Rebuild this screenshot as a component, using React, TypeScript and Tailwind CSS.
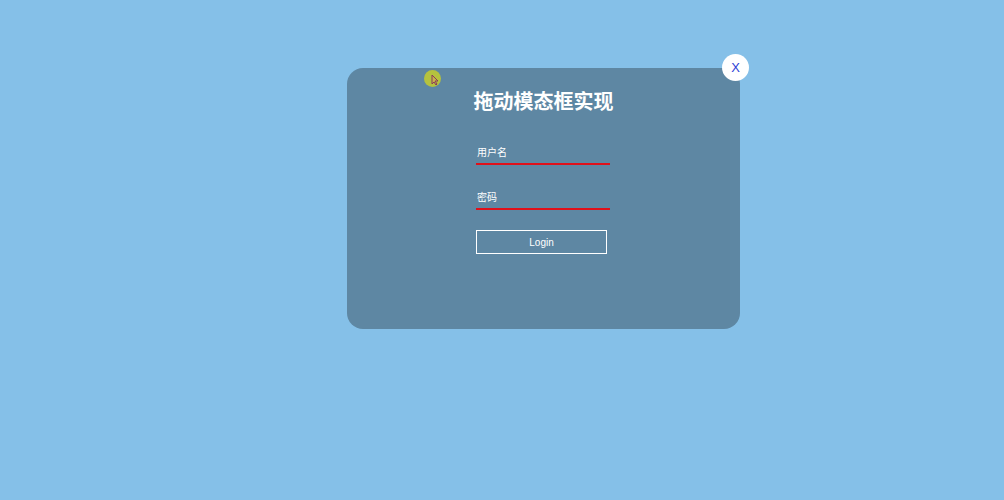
import React from "react";

function CloseButton() {
  return (
    <button className="absolute -right-[9px] -top-[14px] flex h-[27px] w-[27px] items-center justify-center rounded-full bg-white text-[13px] text-[#2f3fd6] [font-family:'Liberation_Sans',sans-serif]">
      X
    </button>
  );
}

function Field({ label }: { label: string }) {
  return (
    <div className="w-[134px] border-b-2 border-[#e0101a] pb-[4px] pl-[1px] text-[10px] leading-[12px] text-white">
      {label}
    </div>
  );
}

export default function App() {
  return (
    <div className="h-[500px] w-full overflow-hidden bg-[#85c0e8] pl-[347px] pt-[68px] [font-family:'Liberation_Sans','Noto_Sans_CJK_SC',sans-serif]">
      <div className="relative h-[261px] w-[393px] rounded-[16px] bg-[#5e87a3]">
        <CloseButton />

        {/* pointer highlight */}
        <div className="absolute left-[77px] top-[2px] h-[17px] w-[17px] rounded-full bg-[#b5c23e]">
          <svg className="absolute left-[7px] top-[4px]" width="8" height="12" viewBox="0 0 8 12">
            <path d="M1 1 L1 10 L3 8 L5 11 L6 10 L4 7 L7 7 Z" fill="#c8b44a" stroke="#8a3a5a" strokeWidth="1" />
          </svg>
        </div>

        <div className="flex flex-col items-center pt-[22px]">
          <h1 className="text-[20px] font-bold leading-[24px] text-white">拖动模态框实现</h1>
          <div className="mr-[1px] mt-[33px] flex flex-col gap-[27px]">
            <Field label="用户名" />
            <Field label="密码" />
          </div>
          <button className="mr-[4px] mt-[20px] h-[24px] w-[131px] border border-white text-[10px] text-white">
            Login
          </button>
        </div>
      </div>
    </div>
  );
}
